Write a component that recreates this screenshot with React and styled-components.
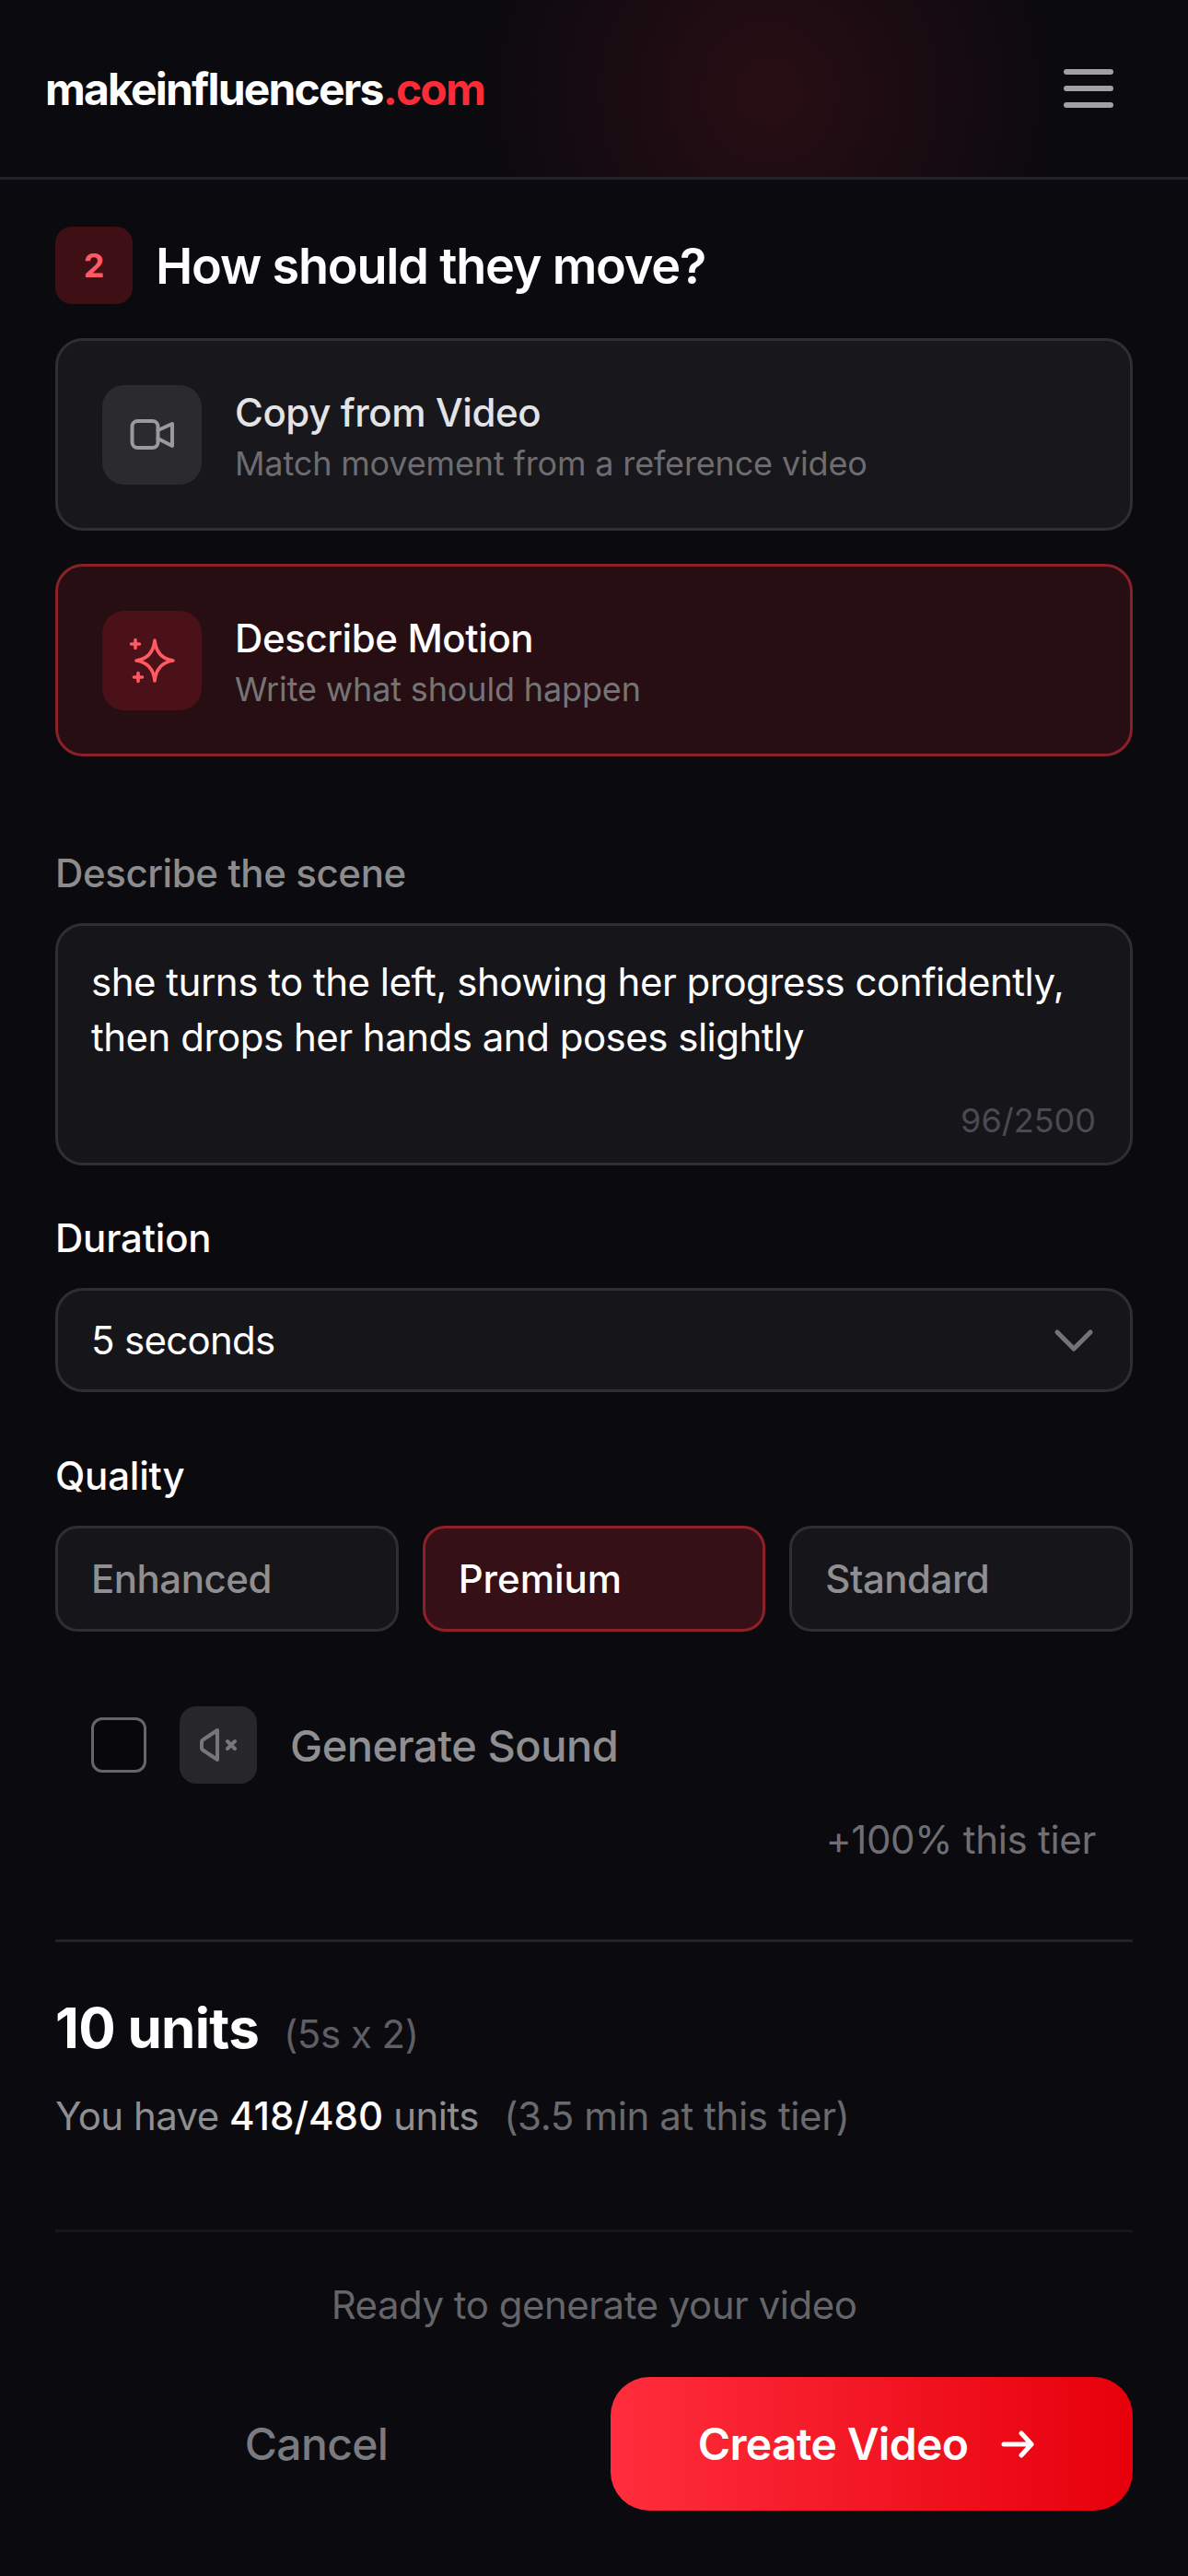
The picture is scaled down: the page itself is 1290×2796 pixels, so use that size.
import React from 'react'
import styled, { createGlobalStyle } from 'styled-components'
import { ChevronDown } from 'lucide-react'

const GlobalStyle = createGlobalStyle`
    html, body {
        margin: 0;
        background: #0a0a0f;
    }
    * {
        box-sizing: border-box;
    }
    body {
        font-family: Inter, "Noto Sans", sans-serif;
        color: #fff;
    }
`

const Page = styled.div`
    width: 1290px;
    height: 2796px;
    overflow: hidden;
    background: #0a0a0f;
`

const Header = styled.header`
    height: 195px;
    padding: 0 81px 0 49px;
    display: flex;
    align-items: center;
    justify-content: space-between;
    border-bottom: 3px solid #222228;
    background: radial-gradient(ellipse 330px 340px at 835px 100px, rgba(120, 24, 34, 0.27), rgba(120, 24, 34, 0.14) 50%, rgba(120, 24, 34, 0) 100%);
`

const Logo = styled.div`
    font-size: 48px;
    font-weight: 700;
    letter-spacing: -1.8px;
    color: #fff;

    span {
        color: #fb2c36;
    }
`

const Burger = styled.div`
    display: flex;
    flex-direction: column;
    gap: 12px;

    span {
        display: block;
        width: 54px;
        height: 6px;
        border-radius: 3px;
        background: #a1a1a5;
    }
`

const Main = styled.main`
    padding: 51px 60px 0;
`

const SectionHead = styled.div`
    display: flex;
    align-items: center;
    gap: 25px;
    margin-bottom: 37px;
`

const StepBadge = styled.div`
    width: 84px;
    height: 84px;
    border-radius: 18px;
    display: flex;
    align-items: center;
    justify-content: center;
    background: #3f0f16;
    color: #ff5a63;
    font-size: 36px;
    font-weight: 700;
`

const Title = styled.h2`
    margin: 0;
    font-size: 54px;
    font-weight: 600;
    letter-spacing: -1.2px;
`

const OptionCard = styled.div`
    height: 209px;
    padding: 0 48px;
    margin-bottom: 36px;
    display: flex;
    align-items: center;
    gap: 36px;
    border-radius: 30px;
    border: 3px solid ${p => (p.$active ? '#8a202a' : '#2e2e33')};
    background: ${p => (p.$active ? '#260e13' : '#18181c')};
`

const IconBox = styled.div`
    width: 108px;
    height: 108px;
    flex: none;
    border-radius: 24px;
    display: flex;
    align-items: center;
    justify-content: center;
    background: ${p => (p.$active ? '#4a1118' : '#2b2b2f')};
    color: ${p => (p.$active ? '#ff5a63' : '#9a9a9c')};
`

const OptionText = styled.div`
    display: flex;
    flex-direction: column;
    gap: 1px;
    padding-top: 2px;
`

const OptionTitle = styled.div`
    font-size: 42px;
    line-height: 60px;
    font-weight: 500;
    letter-spacing: -0.4px;
    color: ${p => (p.$active ? '#fff' : '#e4e4e6')};
`

const OptionSub = styled.div`
    font-size: 36px;
    line-height: 48px;
    letter-spacing: -0.15px;
    color: ${p => (p.$active ? '#757577' : '#6d6d71')};
`

const FieldLabel = styled.div`
    font-size: 42px;
    line-height: 60px;
    font-weight: 500;
    letter-spacing: -0.2px;
    margin-bottom: 24px;
    color: ${p => (p.$muted ? '#8c8c8e' : '#fff')};
`

const SceneLabel = styled(FieldLabel)`
    margin-top: 97px;
    letter-spacing: -0.4px;
`

const SceneBox = styled.div`
    height: 263px;
    padding: 31px 36px 0;
    border-radius: 30px;
    border: 3px solid #2e2e33;
    background: #16161a;
    position: relative;
    font-size: 42px;
    line-height: 60px;
    letter-spacing: -0.5px;
    margin-bottom: 49px;
`

const Counter = styled.div`
    position: absolute;
    right: 37px;
    bottom: 22px;
    font-size: 36px;
    line-height: 48px;
    letter-spacing: 0;
    color: #4a4a50;
`

const Select = styled.div`
    height: 113px;
    padding: 0 36px;
    display: flex;
    align-items: center;
    justify-content: space-between;
    border-radius: 30px;
    border: 3px solid #2e2e33;
    background: #16161a;
    font-size: 42px;
    letter-spacing: -0.7px;
    margin-bottom: 61px;

    svg {
        margin-right: -11px;
        color: #737378;
    }
`

const QualityRow = styled.div`
    display: grid;
    grid-template-columns: repeat(3, 1fr);
    gap: 26px;
    margin-bottom: 81px;
`

const QualityOption = styled.div`
    height: 115px;
    padding: 0 36px;
    display: flex;
    align-items: center;
    border-radius: 24px;
    border: 3px solid ${p => (p.$active ? '#8f1f29' : '#2e2e33')};
    background: ${p => (p.$active ? '#351017' : '#16161a')};
    color: ${p => (p.$active ? '#fff' : '#8f8f91')};
    font-size: 42px;
    font-weight: 500;
    letter-spacing: ${p => (p.$active ? '0' : '-0.5px')};
`

const SoundRow = styled.div`
    display: flex;
    align-items: center;
    padding-left: 39px;
    margin-bottom: 31px;
`

const Checkbox = styled.div`
    width: 60px;
    height: 60px;
    border-radius: 12px;
    border: 3px solid #66666a;
    background: #08080c;
    margin-right: 36px;
`

const SoundIcon = styled.div`
    width: 84px;
    height: 84px;
    border-radius: 18px;
    background: #27272a;
    color: #777779;
    display: flex;
    align-items: center;
    justify-content: center;
    margin-right: 36px;
`

const SoundLabel = styled.div`
    font-size: 47px;
    font-weight: 500;
    letter-spacing: -0.5px;
    color: #8f8f91;
`

const TierNote = styled.div`
    text-align: right;
    padding-right: 40px;
    font-size: 42px;
    line-height: 60px;
    letter-spacing: -0.3px;
    color: #6f6f73;
    margin-bottom: 78px;
`

const Divider = styled.div`
    height: 3px;
    background: ${p => (p.$faint ? '#17171b' : '#232327')};
`

const UnitsRow = styled.div`
    display: flex;
    align-items: baseline;
    gap: 27px;
    margin-top: 57px;
    line-height: 72px;
`

const Units = styled.span`
    font-size: 60px;
    font-weight: 700;
    letter-spacing: -0.7px;
`

const UnitsMath = styled.span`
    font-size: 42px;
    letter-spacing: -0.5px;
    color: #5f5f63;
`

const Balance = styled.div`
    margin-top: 23px;
    margin-bottom: 93px;
    font-size: 42px;
    line-height: 60px;
    letter-spacing: -0.55px;
    color: #8f8f91;

    strong {
        color: #fff;
        font-weight: 500;
        letter-spacing: 0;
    }

    em {
        font-style: normal;
        letter-spacing: -0.4px;
        color: #6a6a6e;
        margin-left: 16px;
    }
`

const Ready = styled.div`
    margin-top: 49px;
    margin-bottom: 48px;
    text-align: center;
    font-size: 42px;
    line-height: 60px;
    letter-spacing: -0.5px;
    color: #656569;
`

const Actions = styled.div`
    display: flex;
    align-items: center;
`

const CancelButton = styled.div`
    flex: 1;
    padding-right: 36px;
    text-align: center;
    font-size: 48px;
    font-weight: 500;
    letter-spacing: -0.6px;
    color: #7b7b7f;
`

const CreateButton = styled.div`
    width: 567px;
    height: 145px;
    padding-right: 12px;
    border-radius: 42px;
    display: flex;
    align-items: center;
    justify-content: center;
    gap: 36px;
    font-size: 48px;
    font-weight: 600;
    letter-spacing: -0.7px;
    background: linear-gradient(90deg, #ff2d3d 0%, #e7000b 100%);
`

const Camera = () => (
    <svg width="60" height="60" viewBox="0 0 60 60" fill="none" stroke="currentColor" strokeWidth="4" strokeLinecap="round" strokeLinejoin="round">
        <rect x="8.5" y="15" width="28" height="29" rx="6" />
        <path d="M36.5 25 L52 18 V42 L36.5 34" />
    </svg>
)

const Sparkle = () => (
    <svg width="60" height="60" viewBox="0 0 60 60" fill="none" stroke="currentColor" strokeWidth="3.6" strokeLinecap="round" strokeLinejoin="round">
        <path d="M33 8 Q35 27.5 53 30 Q35 32.5 33 52 Q31 32.5 13 30 Q31 27.5 33 8 Z" />
        <path d="M12 7.5 V16.5 M7.5 12 H16.5" />
        <path d="M15 43.5 V52.5 M10.5 48 H19.5" />
    </svg>
)

const SpeakerOff = () => (
    <svg width="60" height="60" viewBox="0 0 60 60" fill="none" stroke="currentColor" strokeWidth="4" strokeLinecap="round" strokeLinejoin="round">
        <path d="M29 14 L14 24 Q12 25 12 27 V33 Q12 35 14 36 L29 46 Z" />
        <path d="M40 26 L48 34 M48 26 L40 34" />
    </svg>
)

const Arrow = () => (
    <svg width="36" height="40" viewBox="0 0 36 40" fill="none" stroke="currentColor" strokeWidth="5" strokeLinecap="round" strokeLinejoin="round">
        <path d="M3 20 H33 M22 8 L33 20 L22 32" />
    </svg>
)

export default function App() {
    return (
        <Page>
            <GlobalStyle />
            <Header>
                <Logo>makeinfluencers<span>.com</span></Logo>
                <Burger><span /><span /><span /></Burger>
            </Header>
            <Main>
                <SectionHead>
                    <StepBadge>2</StepBadge>
                    <Title>How should they move?</Title>
                </SectionHead>

                <OptionCard>
                    <IconBox><Camera /></IconBox>
                    <OptionText>
                        <OptionTitle>Copy from Video</OptionTitle>
                        <OptionSub>Match movement from a reference video</OptionSub>
                    </OptionText>
                </OptionCard>
                <OptionCard $active>
                    <IconBox $active><Sparkle /></IconBox>
                    <OptionText>
                        <OptionTitle $active>Describe Motion</OptionTitle>
                        <OptionSub $active>Write what should happen</OptionSub>
                    </OptionText>
                </OptionCard>

                <SceneLabel $muted>Describe the scene</SceneLabel>
                <SceneBox>
                    she turns to the left, showing her progress confidently, then drops her hands and poses slightly
                    <Counter>96/2500</Counter>
                </SceneBox>

                <FieldLabel>Duration</FieldLabel>
                <Select>
                    5 seconds
                    <ChevronDown size={72} strokeWidth={1.7} />
                </Select>

                <FieldLabel>Quality</FieldLabel>
                <QualityRow>
                    <QualityOption>Enhanced</QualityOption>
                    <QualityOption $active>Premium</QualityOption>
                    <QualityOption>Standard</QualityOption>
                </QualityRow>

                <SoundRow>
                    <Checkbox />
                    <SoundIcon><SpeakerOff /></SoundIcon>
                    <SoundLabel>Generate Sound</SoundLabel>
                </SoundRow>
                <TierNote>+100% this tier</TierNote>

                <Divider />
                <UnitsRow>
                    <Units>10 units</Units>
                    <UnitsMath>(5s x 2)</UnitsMath>
                </UnitsRow>
                <Balance>
                    You have <strong>418/480</strong> units <em>(3.5 min at this tier)</em>
                </Balance>
                <Divider $faint />
                <Ready>Ready to generate your video</Ready>
                <Actions>
                    <CancelButton>Cancel</CancelButton>
                    <CreateButton>
                        Create Video
                        <Arrow />
                    </CreateButton>
                </Actions>
            </Main>
        </Page>
    )
}
